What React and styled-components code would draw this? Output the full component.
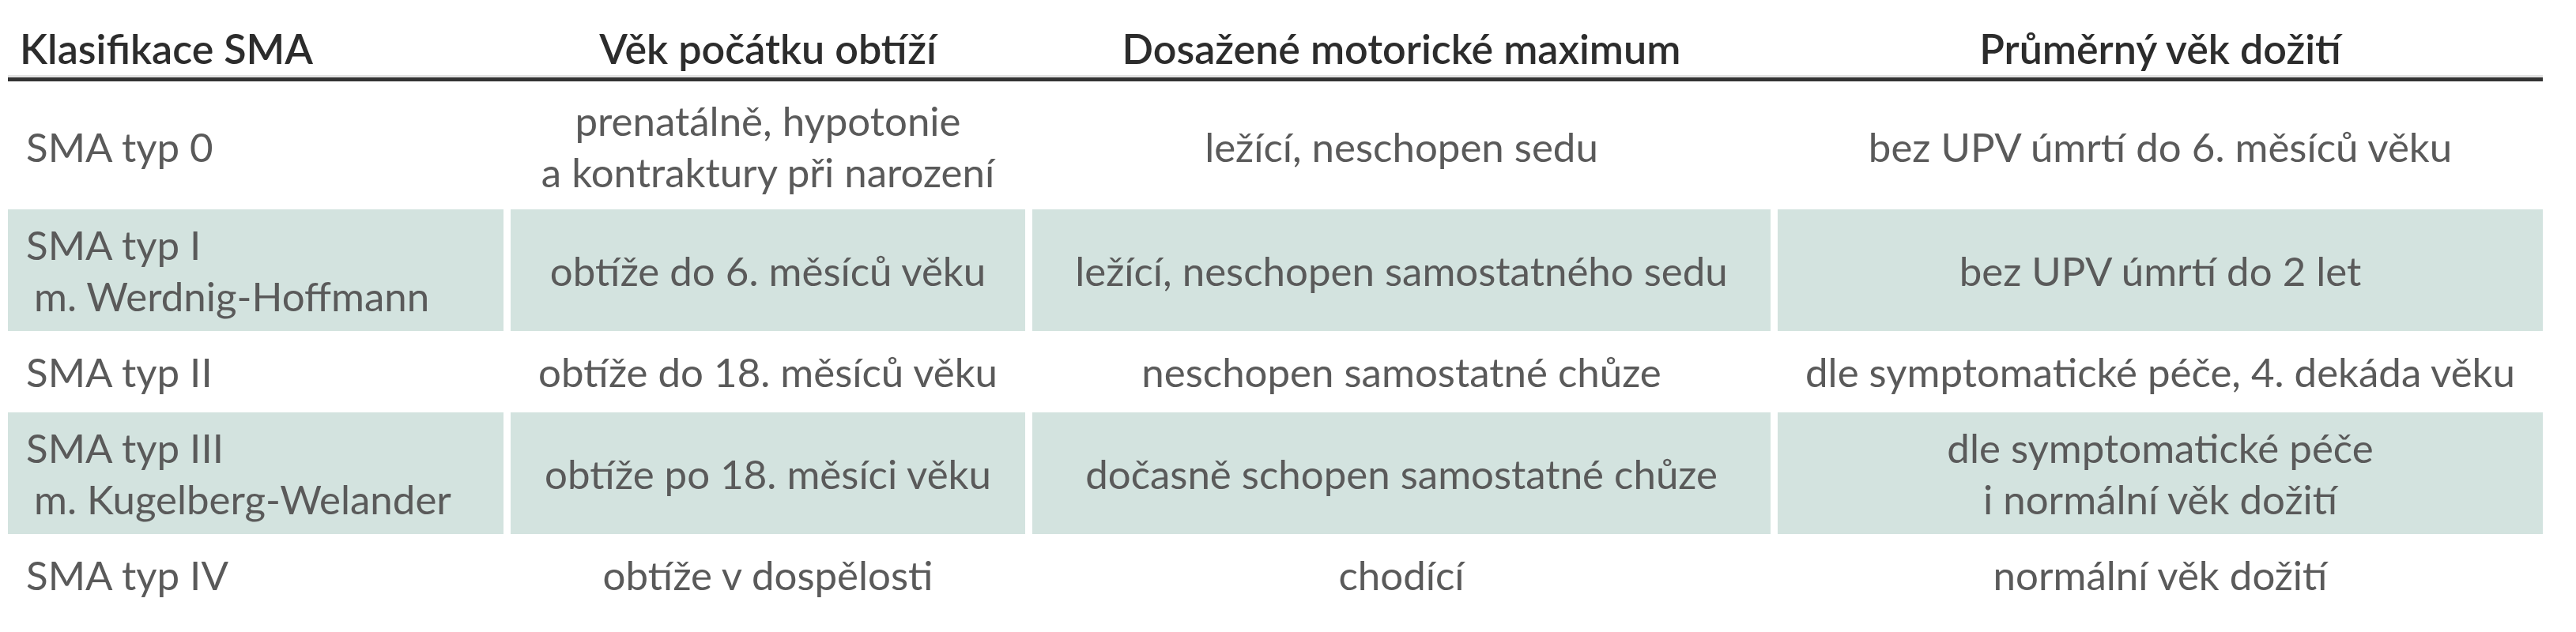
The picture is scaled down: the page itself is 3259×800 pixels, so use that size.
import React from 'react';
import styled, { createGlobalStyle } from 'styled-components';

const colors = {
  head: '#2c2c2c',
  text: '#5a5a5a',
  shade: '#d3e3df',
  rule: '#333333',
  ruleLight: '#e2e2e2',
};

const GlobalStyle = createGlobalStyle`
  html, body {
    margin: 0;
    padding: 0;
    background: #ffffff;
  }
  body {
    font-family: Lato, 'Open Sans', sans-serif;
  }
`;

const columns = '627px 651px 934px 968px';

const Table = styled.div`
  width: 3207px;
  margin-left: 10px;
  display: flex;
  flex-direction: column;
  gap: 3px;
`;

const HeadRow = styled.div`
  display: grid;
  grid-template-columns: ${columns};
  column-gap: 9px;
  padding: 29px 0 4px;
  border-bottom: 5px solid ${colors.rule};
  box-shadow: inset 0 -3px 0 ${colors.ruleLight};
  margin-bottom: 2px;
`;

const HeadCell = styled.div`
  font-size: 52px;
  line-height: 65px;
  font-weight: 600;
  color: ${colors.head};
  white-space: nowrap;
  text-align: ${p => (p.$left ? 'left' : 'center')};
  padding-left: ${p => (p.$left ? '15px' : '0')};
`;

const Row = styled.div`
  display: grid;
  grid-template-columns: ${columns};
  column-gap: 9px;
`;

const Cell = styled.div`
  min-height: 97px;
  box-sizing: border-box;
  padding: 12px ${p => (p.$left ? '0 12px 23px' : '6px')};
  display: flex;
  flex-direction: column;
  justify-content: center;
  align-items: ${p => (p.$left ? 'flex-start' : 'center')};
  text-align: ${p => (p.$left ? 'left' : 'center')};
  background: ${p => (p.$shaded ? colors.shade : 'transparent')};
  font-size: 51px;
  line-height: 65px;
  color: ${colors.text};
  white-space: nowrap;
`;

const Line = styled.span`
  display: block;
  padding-left: ${p => (p.$indent ? '10px' : '0')};
`;

const headers = [
  'Klasifikace SMA',
  'Věk počátku obtíží',
  'Dosažené motorické maximum',
  'Průměrný věk dožití',
];

const rows = [
  [
    ['SMA typ 0'],
    ['prenatálně, hypotonie', 'a kontraktury při narození'],
    ['ležící, neschopen sedu'],
    ['bez UPV úmrtí do 6. měsíců věku'],
  ],
  [
    ['SMA typ I', 'm. Werdnig-Hoffmann'],
    ['obtíže do 6. měsíců věku'],
    ['ležící, neschopen samostatného sedu'],
    ['bez UPV úmrtí do 2 let'],
  ],
  [
    ['SMA typ II'],
    ['obtíže do 18. měsíců věku'],
    ['neschopen samostatné chůze'],
    ['dle symptomatické péče, 4. dekáda věku'],
  ],
  [
    ['SMA typ III', 'm. Kugelberg-Welander'],
    ['obtíže po 18. měsíci věku'],
    ['dočasně schopen samostatné chůze'],
    ['dle symptomatické péče', 'i normální věk dožití'],
  ],
  [
    ['SMA typ IV'],
    ['obtíže v dospělosti'],
    ['chodící'],
    ['normální věk dožití'],
  ],
];

const App = () => (
  <>
    <GlobalStyle />
    <Table>
      <HeadRow>
        {headers.map((h, i) => (
          <HeadCell key={h} $left={i === 0}>
            {h}
          </HeadCell>
        ))}
      </HeadRow>
      {rows.map((row, r) => (
        <Row key={r}>
          {row.map((lines, c) => (
            <Cell key={c} $left={c === 0} $shaded={r % 2 === 1}>
              {lines.map((text, l) => (
                <Line key={l} $indent={c === 0 && l === 1}>
                  {text}
                </Line>
              ))}
            </Cell>
          ))}
        </Row>
      ))}
    </Table>
  </>
);

export default App;
